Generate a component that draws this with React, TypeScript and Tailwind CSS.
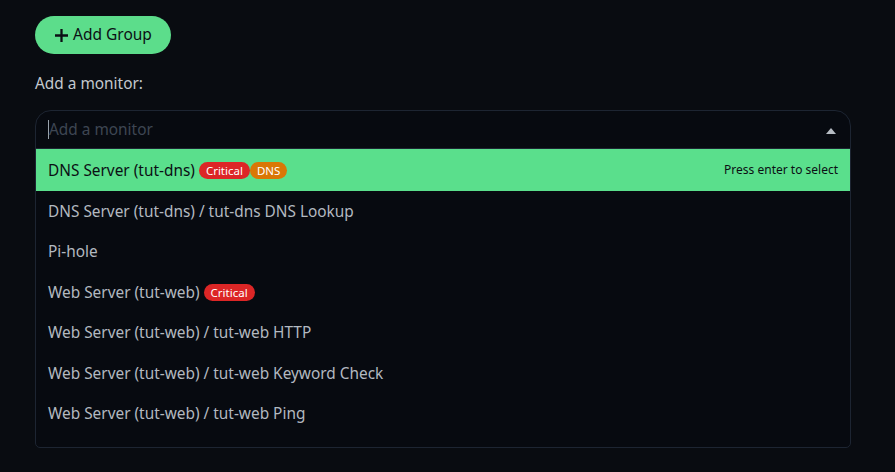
const rows = [
  { label: "DNS Server (tut-dns)", tags: [{ name: "Critical", cls: "bg-[#dc2626]" }, { name: "DNS", cls: "bg-[#d97706]" }] },
  { label: "DNS Server (tut-dns) / tut-dns DNS Lookup", tags: [] },
  { label: "Pi-hole", tags: [] },
  { label: "Web Server (tut-web)", tags: [{ name: "Critical", cls: "bg-[#dc2626]" }] },
  { label: "Web Server (tut-web) / tut-web HTTP", tags: [] },
  { label: "Web Server (tut-web) / tut-web Keyword Check", tags: [] },
  { label: "Web Server (tut-web) / tut-web Ping", tags: [] },
];

const App = () => {
  return (
    <div
      className="w-[895px] h-[472px] bg-[#090c11] px-[35px] pt-[16px] overflow-hidden"
      style={{ fontFamily: '"Noto Sans", "Open Sans", sans-serif' }}
    >
      <button className="h-[38px] pl-[20px] pr-[19px] rounded-full bg-[#5cdd8b] text-[#0b0f14] text-[15.5px] flex items-center gap-[5px]">
        <svg width="13" height="13" viewBox="0 0 16 16" fill="currentColor">
          <path d="M6.6 0h2.8v6.6H16v2.8H9.4V16H6.6V9.4H0V6.6h6.6z" />
        </svg>
        Add Group
      </button>

      <div className="mt-[18px] text-[15.4px] text-[#c3c9cf]">Add a monitor:</div>

      <div className="mt-[15px] w-[816px] h-[338px] border border-[#1d2532] bg-[#070a10] rounded-t-[16px] rounded-b-[5px] overflow-hidden">
        <div className="h-[37px] flex items-center pl-[12px] pr-[14px]">
          <span className="w-px h-[19px] bg-[#9aa3ad]" />
          <span className="flex-1 text-[15.4px] text-[#3e4653]">Add a monitor</span>
          <svg width="10" height="6" viewBox="0 0 10 6" className="mt-[2px]">
            <path d="M0 6L5 0L10 6z" fill="#b6bcc3" />
          </svg>
        </div>
        <div className="border-t border-[#1d2532]">
          {rows.map((r, i) => (
            <div
              key={i}
              className={
                i === 0
                  ? "h-[42px] flex items-center px-[12px] bg-[#5adf8c] text-[#0b0f14]"
                  : "h-[40.5px] flex items-center px-[12px] text-[#b3b9c0]"
              }
            >
              <span className="text-[15.4px]">{r.label}</span>
              {r.tags.length > 0 && (
                <span className="ml-[4px] flex">
                  {r.tags.map((t) => (
                    <span
                      key={t.name}
                      className={`${t.cls} text-white text-[11.5px] leading-[17px] h-[17px] px-[7px] rounded-full`}
                    >
                      {t.name}
                    </span>
                  ))}
                </span>
              )}
              {i === 0 && (
                <span className="ml-auto text-[12px] text-[#0b0f14]">Press enter to select</span>
              )}
            </div>
          ))}
        </div>
      </div>
    </div>
  );
};

export default App;
